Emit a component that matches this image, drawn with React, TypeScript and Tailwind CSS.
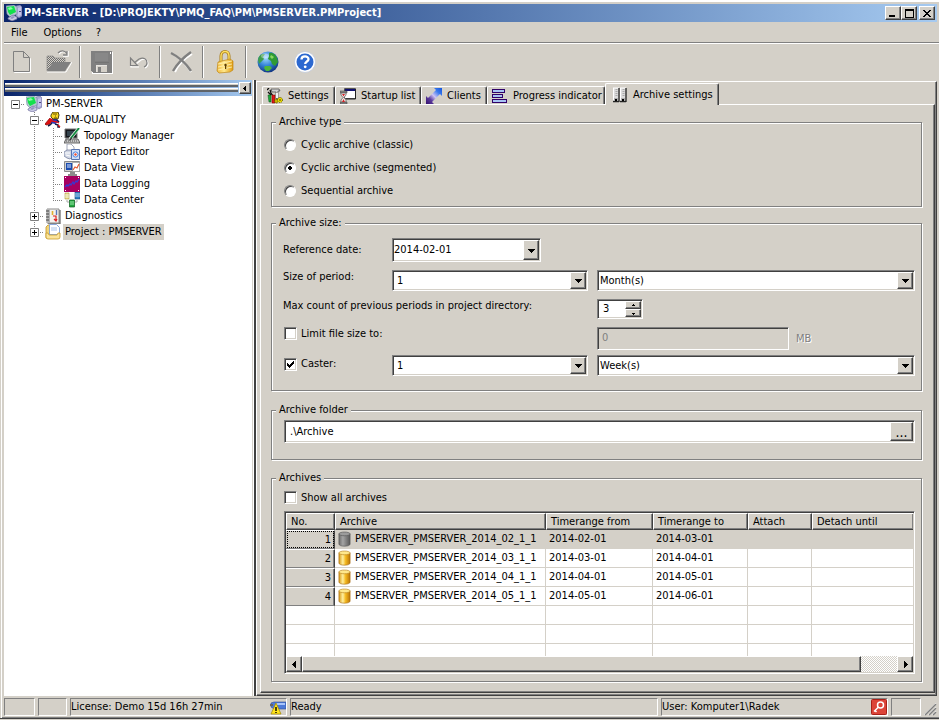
import React, { useState } from 'react';

const RAISED =
  'border border-t-white border-l-white border-r-[#404040] border-b-[#404040] bg-[#d4d0c8] shadow-[inset_-1px_-1px_#808080]';
const SUNKEN =
  'border border-t-[#808080] border-l-[#808080] border-r-white border-b-white p-px shadow-[inset_1px_1px_#404040,inset_-1px_-1px_#d4d0c8]';

interface IconProps {
  children: React.ReactNode;
  size?: number;
}

const Icon: React.FC<IconProps> = ({ children, size = 16 }) => (
  <svg width={size} height={size} viewBox={`0 0 ${size} ${size}`} className="shrink-0" aria-hidden="true">
    {children}
  </svg>
);

const Arrow: React.FC<{ dir: 'down' | 'up' | 'left' | 'right'; small?: boolean }> = ({ dir, small }) => {
  const paths = {
    down: 'M0 2h7v1h-1v1h-1v1h-1v1h-1v-1h-1v-1h-1v-1h-1z',
    up: 'M3 2h1v1h1v1h-3v-1h1z',
    left: 'M5 0v7h-1v-1h-1v-1h-1v-1h-1v-1h1v-1h1v-1h1v-1z',
    right: 'M2 0v7h1v-1h1v-1h1v-1h1v-1h-1v-1h-1v-1h-1v-1z',
  };
  return (
    <svg width="7" height="7" viewBox="0 0 7 7" shapeRendering="crispEdges" className="shrink-0" aria-hidden="true">
      <path d={small && dir === 'down' ? 'M2 3h3v1h-1v1h-1v-1h-1z' : paths[dir]} />
    </svg>
  );
};

/* ---------- icons ---------- */

const ServerIcon = () => (
  <Icon>
    <path d="M10 1l4-1 2 2v9l-3 2-3-2z" fill="#a9a9d6" stroke="#6d6d9c" strokeWidth=".6" />
    <path d="M12 3l3-1v8l-3 1z" fill="#c4c4ea" />
    <path d="M13 6h2v1h-2z" fill="#4c4c80" />
    <path d="M0 1l8-1 3 2v7l-7 3-3-3z" fill="#b5c9cf" stroke="#768aa6" strokeWidth=".6" />
    <path d="M1 2l7-1 2 6-6 3-2-3z" fill="#12e04c" />
    <path d="M2 3l3-1 2 2-4 1z" fill="#8affa4" />
    <path d="M2 13l5-3 4 2v2l-5 2-4-2z" fill="#c9c9e4" stroke="#6d6d9c" strokeWidth=".7" />
    <path d="M4 13l3-2 2 1-3 2z" fill="#9292c0" />
  </Icon>
);

const HeroIcon = () => (
  <Icon>
    <path d="M5 6l5 2-3 3-2 1-4 1-1-1z" fill="#e01010" />
    <path d="M5 6L0 12l1 1 4-1" fill="none" stroke="#900808" strokeWidth=".8" />
    <path d="M8 7h4l1 3-3 2-4-1z" fill="#2038c8" />
    <path d="M6 3l2-3h5l1 3-1 4H8L6 5z" fill="#f8d820" stroke="#3c3000" strokeWidth=".9" />
    <path d="M8 2h4M10 4h1M9 6h3" stroke="#504000" strokeWidth=".9" />
    <path d="M7 9l5 1" stroke="#e01010" strokeWidth="1.500" />
    <path d="M12 8l2 2M7 11l-2 2-2 1M10 12l3 1v2h2" stroke="#181840" strokeWidth="1.500" fill="none" />
    <path d="M13 13l2 2M12 10l2 1" stroke="#e01010" strokeWidth="1.300" />
  </Icon>
);

const TopologyIcon = () => (
  <Icon>
    <path d="M1 1h12v9H1z" fill="#16181c" stroke="#777" />
    <path d="M3 3h8v5H3z" fill="#34444e" />
    <path d="M2 11h12l2 4H0z" fill="#c4c4c4" stroke="#444" strokeWidth=".8" />
    <path d="M2 13h11" stroke="#555" strokeDasharray="1 1" />
    <path d="M15 0L6 11" stroke="#e4f4e8" strokeWidth="3.200" />
    <path d="M15 0L7 10" stroke="#12883e" strokeWidth="1.800" />
    <path d="M7 9l-2 4 3-2z" fill="#222" />
  </Icon>
);

const ReportIcon = () => (
  <Icon>
    <path d="M3 0h4l3 3v6H3z" fill="#fff" stroke="#8a92a8" strokeWidth=".8" />
    <path d="M0 8l3-2h5v7l-2 2-3-1-3-2z" fill="#d0d6e4" stroke="#7680a0" strokeWidth=".8" />
    <path d="M1 9h5M2 11l4 1" stroke="#fff" />
    <path d="M7.500 5.500h8v10h-8z" fill="#cfe0fa" stroke="#5874b0" />
    <circle cx="11.500" cy="10.500" r="2.600" fill="#fff" stroke="#4a80e0" />
    <circle cx="11.500" cy="10.500" r="1.200" fill="#e64b32" />
  </Icon>
);

const DataViewIcon = () => (
  <Icon>
    <path d="M.5 1.500h15v10H.5z" fill="#d0d0d0" stroke="#8a8a8a" />
    <path d="M2 3h7v7H2z" fill="#1c4cae" />
    <path d="M3 5h4M3 7h4" stroke="#dce8ff" />
    <path d="M8.500 2.500h7v9h-7z" fill="#fff" stroke="#999" strokeWidth=".7" />
    <path d="M9 10l2-3 2 1 2-4" stroke="#e65a32" strokeWidth="1.200" fill="none" />
    <path d="M6 12h5v2h2v2H4v-2h2z" fill="#8c8c8c" />
  </Icon>
);

const DataLoggingIcon = () => (
  <Icon>
    <path d="M0 0h16v16H0z" fill="#a80060" />
    <path d="M1 11l2-2 1 1 2-2 1 1 2-3 1 2 2-3 1 1 2-3" stroke="#3838d0" strokeWidth="1.300" fill="none" />
    <path d="M1 1h1v1H1zM14 1h1v1h-1zM1 14h1v1H1zM14 14h1v1h-1z" fill="#fff" />
  </Icon>
);

const DataCenterIcon = () => (
  <Icon>
    <path d="M1 1h4v6H1z" fill="#f0e088" stroke="#a89848" strokeWidth=".6" />
    <path d="M11 0h5v7h-5z" fill="#2f7fc4" stroke="#174a7c" strokeWidth=".6" />
    <path d="M1 3h4M1 5h4M11 2h5M11 4h5" stroke="#e8f2ff" strokeWidth=".7" />
    <path d="M3 8v2h2M13 8v2h-2" stroke="#aaa" fill="none" />
    <path d="M5.500 8h5v7h-5z" fill="#22a83f" stroke="#0c5c1c" strokeWidth=".7" />
    <path d="M6 10h4M6 12h4" stroke="#bff5c8" strokeWidth=".8" />
  </Icon>
);

const DiagnosticsIcon = () => (
  <Icon>
    <path d="M2 1h12v14H2z" fill="#f4f2ee" stroke="#8a8a8a" />
    <path d="M2 1h3v14H2z" fill="#b4b4b4" />
    <path d="M1 3h3M1 6h3M1 9h3M1 12h3" stroke="#444" />
    <path d="M7.500 3v4" stroke="#e0b030" strokeWidth="1.600" />
    <path d="M11.500 2v5" stroke="#5a78b8" strokeWidth="1.400" />
    <path d="M8 8h3v5M9 11l2 2 1-2" stroke="#dc2020" strokeWidth="1.200" fill="none" />
    <path d="M15 2v14H3" stroke="#444" fill="none" />
  </Icon>
);

const ProjectIcon = () => (
  <Icon>
    <path d="M1 3l2-2h3l1 2v11H1z" fill="#f2d478" stroke="#c29628" strokeWidth=".8" />
    <path d="M4.500.5h7l3 3v7h-10z" fill="#fff" stroke="#7fa0d8" strokeWidth=".9" />
    <path d="M6 4h6M6 6h6" stroke="#a9c4ec" />
    <path d="M1 9h2l1 2h8l1-2h2v4q0 2-2 2H3q-2 0-2-2z" fill="#fbe49a" stroke="#c99c2c" strokeWidth=".8" />
  </Icon>
);

const SettingsIcon = () => (
  <Icon>
    <path d="M0 2l2-2M3 2l1 3 2 3 2 5M1 4l3 3" stroke="#111" strokeWidth="1.300" fill="none" />
    <path d="M1 7h3v7H2z" fill="#18a838" stroke="#064c14" strokeWidth=".5" />
    <path d="M5 7h3v8H5z" fill="#e01818" stroke="#700" strokeWidth=".5" />
    <path d="M4 1h8l1 2h-2v8H9V4H5z" fill="#d0d0d0" stroke="#444" strokeWidth=".7" />
    <path d="M9 5h2v5H9z" fill="#f4f4f4" />
    <circle cx="9.500" cy="13" r="2" fill="#c8b400" stroke="#4a4200" strokeDasharray="1 1" />
    <circle cx="13" cy="12" r="2.500" fill="#f0e000" stroke="#4a4200" strokeDasharray="1 1" />
    <circle cx="13" cy="12" r=".8" fill="#302800" />
  </Icon>
);

const StartupIcon = () => (
  <Icon>
    <path d="M4.500.5h11v10h-11z" fill="#fff" stroke="#555" />
    <path d="M5 1h10v2H5z" fill="#101070" />
    <path d="M15.500 1v10H6" fill="none" stroke="#222" />
    <path d="M0 3h7v2H0zM0 14h7v2H0z" fill="#909090" stroke="#333" strokeWidth=".5" />
    <path d="M1 5h5v2L4 9.500 6 12v2H1v-2l2-2.500L1 7z" fill="#f4e8e8" stroke="#555" strokeWidth=".7" />
    <path d="M2 6h3L3.500 8.500zM3.500 11L5 14H2z" fill="#d02828" />
  </Icon>
);

const ClientsIcon = () => (
  <Icon>
    <defs>
      <linearGradient id="clientsArrow" x1="0" y1="1" x2="1" y2="0">
        <stop offset="0" stopColor="#35106e" />
        <stop offset=".28" stopColor="#5a3a9c" />
        <stop offset=".5" stopColor="#cdc4f4" />
        <stop offset=".75" stopColor="#3878ee" />
        <stop offset="1" stopColor="#1455dc" />
      </linearGradient>
    </defs>
    <path d="M16 0H8l2 2-8 8-2-2v8h8l-2-2 8-8 2 2z" fill="url(#clientsArrow)" />
  </Icon>
);

const ProgressIcon = () => (
  <svg width="16" height="16" viewBox="0 0 16 16" shapeRendering="crispEdges" className="shrink-0" aria-hidden="true">
    <path d="M0 1h13v4H0zM0 6h11v4H0zM0 11h15v4H0z" fill="#300068" />
    <path d="M1 2h11v2H1zM1 7h9v2H1zM1 12h13v2H1z" fill="#a8c4f4" />
  </svg>
);

const ArchiveIcon = () => (
  <Icon>
    <path d="M1 1h5v14H1zM8 1h5v14H8z" fill="#dcdcdc" />
    <path d="M0 1h6M.5 1v13M7 1h6M7.500 1v13" stroke="#fff" />
    <path d="M6 1v14M13 1v14M0 14.500h6M7 14.500h6" stroke="#222" strokeWidth="1.300" />
    <path d="M3.500 2v8M10.500 2v8" stroke="#aaa" strokeWidth="2" strokeDasharray="1 1" />
    <path d="M1 11h4v3H1zM8 11h4v3H8z" fill="#b0b0b0" />
    <path d="M2 12h2v2H2zM9 12h2v2H9z" fill="#000" />
  </Icon>
);

const CylinderIcon: React.FC<{ grey?: boolean }> = ({ grey }) => (
  <svg width="13" height="16" viewBox="0 0 14 16" className="shrink-0" aria-hidden="true">
    <defs>
      <linearGradient id="cylGold">
        <stop offset="0" stopColor="#d89a18" />
        <stop offset=".35" stopColor="#fff0a0" />
        <stop offset=".6" stopColor="#f4b820" />
        <stop offset="1" stopColor="#b87408" />
      </linearGradient>
      <linearGradient id="cylGrey">
        <stop offset="0" stopColor="#6c6c6c" />
        <stop offset=".35" stopColor="#a4a4a4" />
        <stop offset="1" stopColor="#585858" />
      </linearGradient>
    </defs>
    <path
      d="M1 2.500v11c0 3 12 3 12 0v-11z"
      fill={grey ? 'url(#cylGrey)' : 'url(#cylGold)'}
      stroke={grey ? '#555' : '#a86c10'}
      strokeWidth=".7"
    />
    <ellipse cx="7" cy="2.500" rx="6" ry="2" fill={grey ? '#9c9c9c' : '#ffe88c'} stroke={grey ? '#555' : '#b88420'} strokeWidth=".7" />
  </svg>
);

/* ---------- title, menu, toolbar ---------- */

const TitleBar = () => (
  <header className="mt-1 mr-0.5 flex h-[18px] items-center bg-linear-to-r from-[#0a246a] to-[#a6caf0] pl-0.5 pr-0.5">
    <ServerIcon />
    <h1 className="ml-0.5 flex-1 truncate text-[11px] font-bold text-white">
      PM-SERVER - [D:\PROJEKTY\PMQ_FAQ\PM\PMSERVER.PMProject]
    </h1>
    <div className="flex">
      <button aria-label="Minimize" className={`flex h-3.5 w-4 items-center justify-center ${RAISED}`}>
        <svg width="8" height="8" viewBox="0 0 8 8" shapeRendering="crispEdges">
          <path d="M0 6h6v2H0z" />
        </svg>
      </button>
      <button aria-label="Maximize" className={`mr-0.5 flex h-3.5 w-4 items-center justify-center ${RAISED}`}>
        <svg width="9" height="9" viewBox="0 0 9 9" shapeRendering="crispEdges">
          <path d="M0 0h9v9H0zM1 2v6h7V2z" fillRule="evenodd" />
        </svg>
      </button>
      <button aria-label="Close" className={`flex h-3.5 w-4 items-center justify-center ${RAISED}`}>
        <svg width="8" height="7" viewBox="0 0 8 7" shapeRendering="crispEdges">
          <path d="M0 0h2v1h1v1h2V1h1V0h2v1H7v1H6v1H5v1h1v1h1v1h1v1H6V6H5V5H3v1H2v1H0V6h1V5h1V4h1V3H2V2H1V1H0z" />
        </svg>
      </button>
    </div>
  </header>
);

const MenuBar = () => (
  <nav className="flex h-[22px] items-center border-b border-white pl-1 shadow-[inset_0_-1px_#808080]">
    <button className="px-[3px]">File</button>
    <button className="ml-2.5 px-[3px]">Options</button>
    <button className="ml-2 px-[3px]">?</button>
  </nav>
);

const ToolButton: React.FC<{ label: string; children: React.ReactNode }> = ({ label, children }) => (
  <button aria-label={label} className="flex h-9 w-[37px] items-center justify-center">
    {children}
  </button>
);

const ToolSeparator = () => <span className="mx-0.5 h-8 w-0.5 border-l border-[#808080] border-r border-r-white" />;

const Toolbar = () => (
  <div role="toolbar" className="-ml-px flex h-9 items-center">
    <ToolButton label="New">
      <svg width="20" height="24" viewBox="0 0 20 24">
        <path d="M2.500 2.500h10l6 6v14h-16z" fill="none" stroke="#fff" />
        <path d="M1.500 1.500h10l6 6v14h-16zM11.500 1.500v6h6" fill="#d4d0c8" stroke="#808080" />
      </svg>
    </ToolButton>
    <ToolButton label="Open">
      <svg width="26" height="24" viewBox="0 0 26 24">
        <defs>
          <pattern id="dither" width="2" height="2" patternUnits="userSpaceOnUse">
            <path d="M0 0h1v1H0zM1 1h1v1H1z" fill="#707070" />
          </pattern>
        </defs>
        <path d="M1 22h19l6-10" fill="none" stroke="#fff" />
        <path d="M1 6h6l2 2h10v13H1z" fill="url(#dither)" stroke="#808080" strokeWidth=".6" />
        <path d="M1 21l6-9h18l-6 9z" fill="#808080" />
        <path d="M13 4c3-4 7-3 9 1M22 1v5h-5" fill="none" stroke="#fff" strokeWidth="1.500" />
        <path d="M12 3c3-3 7-3 9 1M21 1v4h-4" fill="none" stroke="#808080" strokeWidth="1.300" />
      </svg>
    </ToolButton>
    <ToolSeparator />
    <ToolButton label="Save">
      <svg width="23" height="24" viewBox="0 0 23 24" shapeRendering="crispEdges">
        <path d="M2 2h21v22H2z" fill="#fff" />
        <path d="M1 1h21v22H3l-2-2z" fill="#808080" />
        <path d="M5 3h13v8H5z" fill="#888" />
        <path d="M5 12h14v1H5z" fill="#747474" />
        <path d="M6 15h11v7H6z" fill="#e6e4e0" />
        <path d="M7 16h10v6H7z" fill="#d4d0c8" />
        <path d="M8 17h3v5H8z" fill="#808080" />
        <path d="M20 2h1v2h-1z" fill="#fff" />
      </svg>
    </ToolButton>
    <ToolButton label="Undo">
      <svg width="22" height="18" viewBox="0 0 22 18" fill="none">
        <path d="M8 11l5-4c4-2 7 0 7 4 0 2-1 3-3 4M3 6v8h8" stroke="#fff" strokeWidth="1.200" />
        <path d="M6 10l5-4c5-2 8 0 8 4 0 2-1 3-3 4" stroke="#808080" strokeWidth="1.200" />
        <path d="M2.500 5v7.500h7z" fill="#d4d0c8" stroke="#808080" strokeWidth="1.200" />
      </svg>
    </ToolButton>
    <ToolSeparator />
    <ToolButton label="Delete">
      <svg width="24" height="22" viewBox="0 0 24 22" fill="none">
        <path d="M3 3c6 4 13 10 18 18M22 3C14 8 8 14 5 21" stroke="#fff" strokeWidth="2" />
        <path d="M1 2c6 3 14 9 20 18M21 1C14 6 7 13 3 20" stroke="#808080" strokeWidth="2.400" />
      </svg>
    </ToolButton>
    <ToolSeparator />
    <ToolButton label="Lock">
      <svg width="18" height="24" viewBox="0 0 18 24">
        <defs>
          <linearGradient id="lockGold">
            <stop offset="0" stopColor="#f0b83c" />
            <stop offset=".45" stopColor="#ffe88c" />
            <stop offset="1" stopColor="#e09a0c" />
          </linearGradient>
        </defs>
        <path d="M5 12V6c0-6 8-6 8 0v6" fill="none" stroke="#a87c18" strokeWidth="3" />
        <path d="M5 12V6c0-6 8-6 8 0v6" fill="none" stroke="#ffe060" strokeWidth="1.400" />
        <path d="M2 12l12-3 3 2v9l-3 2-11 1-2-2z" fill="url(#lockGold)" stroke="#c08818" strokeWidth=".7" />
        <path d="M2 14l14-3M2 17l14-3M2 20l14-3" stroke="#fff4b8" strokeWidth=".8" />
        <circle cx="9.500" cy="15" r="1.200" fill="#5c3c00" />
        <path d="M9 15h1.200v4H9z" fill="#5c3c00" />
      </svg>
    </ToolButton>
    <ToolSeparator />
    <ToolButton label="Web">
      <svg width="22" height="22" viewBox="0 0 22 22">
        <defs>
          <radialGradient id="globe" cx=".4" cy=".3" r=".75">
            <stop offset="0" stopColor="#a4dcff" />
            <stop offset=".5" stopColor="#3484d8" />
            <stop offset="1" stopColor="#0c2c78" />
          </radialGradient>
        </defs>
        <circle cx="11" cy="11" r="10.500" fill="url(#globe)" />
        <path d="M1 9c0-3 2-5 4-6l3 0-2 3 1 2-3 3-2 2z" fill="#3f9e4c" />
        <path d="M12 2c4-1 7 2 8 5l1 4-3 4-3-2-1-3-3-2 1-3z" fill="#2f9a34" />
        <path d="M14 4l3 2-2 2-2-2z" fill="#8cd860" />
        <path d="M8 15l5 0 2 2-3 3-3 0-2-3z" fill="#4cb63c" />
        <ellipse cx="8" cy="5" rx="4" ry="2.500" fill="#fff" opacity=".35" />
      </svg>
    </ToolButton>
    <ToolButton label="Help">
      <svg width="22" height="22" viewBox="0 0 22 22">
        <circle cx="11" cy="11" r="10.500" fill="#fff" stroke="#c0c8d8" strokeWidth=".8" />
        <circle cx="11" cy="11" r="8.500" fill="#2c68d0" />
        <path d="M7.500 8.500c0-4 7-4 7-.3 0 2.300-3.300 2.300-3.300 4.800" fill="none" stroke="#fff" strokeWidth="2.300" />
        <circle cx="11.200" cy="15.800" r="1.400" fill="#fff" />
      </svg>
    </ToolButton>
  </div>
);

/* ---------- tree ---------- */

type Cell = 'plus' | 'minus' | 'minusRoot' | 'line' | 'tee' | 'end' | 'plusEnd' | 'blank';

interface TreeItem {
  label: string;
  icon: React.ReactNode;
  cells: Cell[];
  selected?: boolean;
}

const TREE: TreeItem[] = [
  { label: 'PM-SERVER', icon: <ServerIcon />, cells: ['minusRoot'] },
  { label: 'PM-QUALITY', icon: <HeroIcon />, cells: ['blank', 'minus'] },
  { label: 'Topology Manager', icon: <TopologyIcon />, cells: ['blank', 'line', 'tee'] },
  { label: 'Report Editor', icon: <ReportIcon />, cells: ['blank', 'line', 'tee'] },
  { label: 'Data View', icon: <DataViewIcon />, cells: ['blank', 'line', 'tee'] },
  { label: 'Data Logging', icon: <DataLoggingIcon />, cells: ['blank', 'line', 'tee'] },
  { label: 'Data Center', icon: <DataCenterIcon />, cells: ['blank', 'line', 'end'] },
  { label: 'Diagnostics', icon: <DiagnosticsIcon />, cells: ['blank', 'plus'] },
  { label: 'Project : PMSERVER', icon: <ProjectIcon />, cells: ['blank', 'plusEnd'], selected: true },
];

const TreeCell: React.FC<{ kind: Cell }> = ({ kind }) => {
  const hasBox = kind.startsWith('plus') || kind.startsWith('minus');
  const up = kind !== 'minusRoot' && kind !== 'blank';
  const down = kind === 'plus' || kind === 'minus' || kind === 'line' || kind === 'tee';
  return (
    <svg width="19" height="16" viewBox="0 0 19 16" className="shrink-0" aria-hidden="true">
      <g stroke="#808080" strokeDasharray="1 1" fill="none">
        {up && <path d="M9.500 0v8" />}
        {down && <path d="M9.500 8v8" />}
        {kind !== 'line' && kind !== 'blank' && <path d="M9 8.500h10" />}
      </g>
      {hasBox && (
        <>
          <path d="M5.500 4.500h8v8h-8z" fill="#fff" stroke="#808080" />
          <path d="M7 8.500h5" stroke="#000" />
          {kind.startsWith('plus') && <path d="M9.500 6v5" stroke="#000" />}
        </>
      )}
    </svg>
  );
};

const Sidebar = () => (
  <aside className="flex w-[248px] shrink-0 flex-col bg-white">
    <div className="flex h-4 items-start gap-px bg-linear-to-r from-[#0a246a] to-[#a6caf0] pt-0.5 pr-px pl-px">
      <div className="mt-px flex flex-1 flex-col gap-px">
        <span className="h-1 border-t border-white bg-[#d4d0c8] border-b-2 border-b-[#606468]" />
        <span className="h-1 border-t border-white bg-[#d4d0c8] border-b-2 border-b-[#606468]" />
      </div>
      <button aria-label="Hide panel" className={`flex h-3 w-3 items-center justify-center ${RAISED}`}>
        <svg width="4" height="5" viewBox="0 0 4 5" shapeRendering="crispEdges">
          <path d="M3 0v5H2V4H1V3H0V2h1V1h1V0z" />
        </svg>
      </button>
    </div>
    <ul role="tree" className="flex-1">
      {TREE.map(item => (
        <li key={item.label} role="treeitem" aria-selected={!!item.selected} className="flex h-4 items-center pl-0.5">
          {item.cells.map((kind, i) => (
            <TreeCell key={i} kind={kind} />
          ))}
          <span className="ml-px">{item.icon}</span>
          <span className={`ml-0.5 px-0.5 leading-4 whitespace-nowrap ${item.selected ? 'bg-[#d4d0c8]' : ''}`}>
            {item.label}
          </span>
        </li>
      ))}
    </ul>
  </aside>
);

/* ---------- form controls ---------- */

const Group: React.FC<{ title: string; className: string; children: React.ReactNode }> = ({ title, className, children }) => (
  <fieldset
    className={`min-w-0 border border-[#808080] pr-1.5 pl-3 shadow-[1px_1px_#fff,inset_1px_1px_#fff] ${className}`}
  >
    <legend className="-ml-2 h-3.5 bg-[#d4d0c8] pr-[3px] pl-[3px]">{title}</legend>
    {children}
  </fieldset>
);

interface SelectBoxProps {
  id: string;
  label: string;
  value: string;
  className: string;
}

const SelectBox: React.FC<SelectBoxProps> = ({ id, label, value, className }) => (
  <div className={`relative bg-white ${SUNKEN} ${className}`}>
    <select id={id} aria-label={label} className="block h-full w-full appearance-none bg-transparent outline-none">
      <option>{value}</option>
    </select>
    <span
      className={`pointer-events-none absolute top-px right-px bottom-px flex w-4 items-center justify-center ${RAISED}`}
    >
      <Arrow dir="down" />
    </span>
  </div>
);

const CheckBox: React.FC<{ label: string; defaultChecked?: boolean }> = ({ label, defaultChecked }) => (
  <label className="flex h-[13px] items-center gap-1">
    <span className="relative size-[13px] shrink-0">
      <input
        type="checkbox"
        defaultChecked={defaultChecked}
        className={`peer block size-[13px] appearance-none bg-white ${SUNKEN}`}
      />
      <svg
        width="7"
        height="7"
        viewBox="0 0 7 7"
        shapeRendering="crispEdges"
        className="pointer-events-none absolute top-[3px] left-[3px] hidden peer-checked:block"
      >
        <path d="M0 2h1v1h1v1h1V3h1V2h1V1h1V0h1v3H6v1H5v1H4v1H3v1H2V6H1V5H0z" />
      </svg>
    </span>
    {label}
  </label>
);

const ARCHIVE_TYPES = ['Cyclic archive (classic)', 'Cyclic archive (segmented)', 'Sequential archive'];

const ArchiveType = () => {
  const [type, setType] = useState(ARCHIVE_TYPES[1]);
  return (
    <Group title="Archive type" className="pt-1 pb-1">
      {ARCHIVE_TYPES.map(t => (
        <label key={t} className="flex h-[23px] items-center gap-1">
          <input
            type="radio"
            name="archiveType"
            checked={type === t}
            onChange={() => setType(t)}
            className="mr-px size-3 appearance-none rounded-full border border-t-[#808080] border-r-white border-b-white border-l-[#808080] bg-white shadow-[inset_1px_1px_#404040] checked:bg-[radial-gradient(circle,#000_2px,#fff_2px)]"
          />
          {t}
        </label>
      ))}
    </Group>
  );
};

const ArchiveSize = () => (
  <Group title="Archive size:" className="mt-[9px] pt-2 pb-3.5">
    <div className="-ml-px grid grid-cols-[100px_196px_1fr] grid-rows-[32px_29px_28px_28px_21px] items-start gap-x-[9px]">
      <label htmlFor="refDate" className="flex h-6 items-center">
        Reference date:
      </label>
      <SelectBox id="refDate" label="Reference date" value="2014-02-01" className="col-span-2 h-6 w-[149px]" />

      <label htmlFor="period">Size of period:</label>
      <SelectBox id="period" label="Size of period" value="1" className="h-[21px] pl-1" />
      <SelectBox id="periodUnit" label="Period unit" value="Month(s)" className="h-[21px] pl-0.5" />

      <label htmlFor="maxCount" className="col-span-2">
        Max count of previous periods in project directory:
      </label>
      <div className={`flex h-5 w-[46px] bg-white ${SUNKEN}`}>
        <input id="maxCount" defaultValue="3" className="w-0 flex-1 bg-transparent pl-1 outline-none" />
        <div className="flex w-4 flex-col">
          <button aria-label="Increase" className={`flex h-2 items-center justify-center ${RAISED}`}>
            <Arrow dir="up" small />
          </button>
          <button aria-label="Decrease" className={`flex h-2 items-center justify-center ${RAISED}`}>
            <Arrow dir="down" small />
          </button>
        </div>
      </div>

      <div className="col-span-2 pl-px">
        <CheckBox label="Limit file size to:" />
      </div>
      <div className="flex items-center">
        <input
          aria-label="File size limit"
          disabled
          defaultValue="0"
          className={`h-[23px] w-[192px] pb-1 pl-1 text-[#808080] ${SUNKEN}`}
        />
        <span className="ml-[7px] text-[#808080] [text-shadow:1px_1px_#fff]">MB</span>
      </div>

      <div className="flex h-[18px] items-center pl-px">
        <CheckBox label="Caster:" defaultChecked />
      </div>
      <SelectBox id="caster" label="Caster" value="1" className="h-[21px] pl-1" />
      <SelectBox id="casterUnit" label="Caster unit" value="Week(s)" className="h-[21px] pl-0.5" />
    </div>
  </Group>
);

const ArchiveFolder = () => (
  <Group title="Archive folder" className="mt-3 pt-[3px] pb-4">
    <div className={`flex h-[23px] bg-white ${SUNKEN}`}>
      <input aria-label="Archive folder" defaultValue=".\Archive" className="min-w-0 flex-1 pl-1 outline-none" />
      <button aria-label="Browse" className={`w-[23px] text-sm leading-3 ${RAISED}`}>
        ...
      </button>
    </div>
  </Group>
);

/* ---------- archives table ---------- */

const COLUMNS = ['No.', 'Archive', 'Timerange from', 'Timerange to', 'Attach', 'Detach until'];

const ARCHIVES = [
  { name: 'PMSERVER_PMSERVER_2014_02_1_1', from: '2014-02-01', to: '2014-03-01' },
  { name: 'PMSERVER_PMSERVER_2014_03_1_1', from: '2014-03-01', to: '2014-04-01' },
  { name: 'PMSERVER_PMSERVER_2014_04_1_1', from: '2014-04-01', to: '2014-05-01' },
  { name: 'PMSERVER_PMSERVER_2014_05_1_1', from: '2014-05-01', to: '2014-06-01' },
];

const CELL = 'h-[19px] border-r border-b border-[#d4d0c8] p-0 pl-[3px] whitespace-nowrap last:border-r-0';

const ArchivesTable = () => {
  const [selected, setSelected] = useState(0);
  return (
    <div className={`mt-[7px] bg-white ${SUNKEN}`}>
      <div className="h-[143px] overflow-hidden">
        <table className="w-full table-fixed border-separate border-spacing-0">
          <colgroup>
            <col className="w-[49px]" />
            <col className="w-[211px]" />
            <col className="w-[107px]" />
            <col className="w-[95px]" />
            <col className="w-[64px]" />
            <col />
          </colgroup>
          <thead>
            <tr>
              {COLUMNS.map(c => (
                <th key={c} className={`h-[17px] p-0 pl-1 text-left leading-3.5 font-normal last:border-r-0 ${RAISED}`}>
                  {c}
                </th>
              ))}
            </tr>
          </thead>
          <tbody>
            {ARCHIVES.map((a, i) => (
              <tr key={a.name} onClick={() => setSelected(i)} className={i === selected ? 'bg-[#d4d0c8]' : ''}>
                <th
                  className={`h-[19px] border-t border-r border-b border-t-white border-r-[#404040] border-b-[#808080] bg-[#d4d0c8] p-0 pr-[3px] text-right font-normal shadow-[inset_-1px_0_#808080] ${
                    i === selected ? 'outline outline-dotted -outline-offset-2 outline-black' : ''
                  }`}
                >
                  {i + 1}
                </th>
                <td className={CELL}>
                  <span className="flex items-center gap-1">
                    <CylinderIcon grey={i === 0} />
                    {a.name}
                  </span>
                </td>
                <td className={CELL}>{a.from}</td>
                <td className={CELL}>{a.to}</td>
                <td className={CELL} />
                <td className={CELL} />
              </tr>
            ))}
            {[0, 1, 2].map(i => (
              <tr key={i}>
                {COLUMNS.map(c => (
                  <td key={c} className={CELL} />
                ))}
              </tr>
            ))}
          </tbody>
        </table>
      </div>
      <div className="flex h-4 bg-[repeating-conic-gradient(#fff_0_25%,#d4d0c8_0_50%)] bg-size-[2px_2px]">
        <button aria-label="Scroll left" className={`flex w-4 items-center justify-center ${RAISED}`}>
          <Arrow dir="left" />
        </button>
        <div className="flex-1">
          <div className={`h-4 w-[94%] ${RAISED}`} />
        </div>
        <button aria-label="Scroll right" className={`flex w-4 items-center justify-center ${RAISED}`}>
          <Arrow dir="right" />
        </button>
      </div>
    </div>
  );
};

const Archives = () => (
  <Group title="Archives" className="mt-[11px] flex-1 pt-1.5 pb-1.5">
    <CheckBox label="Show all archives" />
    <ArchivesTable />
  </Group>
);

/* ---------- tabs ---------- */

const TABS = [
  { label: 'Settings', icon: <SettingsIcon />, width: 'w-[73px]' },
  { label: 'Startup list', icon: <StartupIcon />, width: 'w-[86px]' },
  { label: 'Clients', icon: <ClientsIcon />, width: 'w-[66px]' },
  { label: 'Progress indicator', icon: <ProgressIcon />, width: 'w-[118px]' },
];

const TabStrip = () => (
  <div role="tablist" className="flex h-[21px] items-end pl-0.5">
    {TABS.map(tab => (
      <button
        key={tab.label}
        role="tab"
        aria-selected="false"
        className={`flex h-[18px] items-center gap-[5px] rounded-t-xs border-t border-r border-l border-white border-r-[#404040] pl-1 whitespace-nowrap shadow-[inset_-1px_0_#808080] last-of-type:border-r-white ${tab.width}`}
      >
        {tab.icon}
        {tab.label}
      </button>
    ))}
    <button
      role="tab"
      aria-selected="true"
      className="relative -mb-px flex h-[22px] w-[114px] items-center gap-1 rounded-t-xs border-t border-r border-l border-white border-r-[#404040] bg-[#d4d0c8] pl-[7px] whitespace-nowrap shadow-[inset_-1px_0_#808080]"
    >
      <ArchiveIcon />
      Archive settings
    </button>
  </div>
);

/* ---------- status bar ---------- */

const PANE = 'flex items-center border border-t-[#808080] border-r-white border-b-white border-l-[#808080]';

const StatusBar = () => (
  <footer className="mt-0.5 mr-0.5 flex h-[18px] gap-[3px]">
    <div className={`w-[31px] ${PANE}`} />
    <div className={`w-[29px] ${PANE}`} />
    <div className={`w-[217px] justify-between ${PANE}`}>
      License: Demo 15d 16h 27min
      <Icon>
        <path d="M1 4l3-1h12v7H4L1 8z" fill="#4e7ad8" stroke="#2c4a94" strokeWidth=".6" />
        <path d="M6 5h9" stroke="#a8c4fa" strokeWidth="2" />
        <path d="M0 6h3" stroke="#666" strokeWidth="2" />
        <path d="M6 4l5 11H1z" fill="#ffe41c" stroke="#a08400" strokeWidth=".7" />
        <path d="M6 8v4M6 13v1" stroke="#000" strokeWidth="1.400" />
      </Icon>
    </div>
    <div className={`flex-1 ${PANE}`}>Ready</div>
    <div className={`w-[227px] justify-between ${PANE}`}>
      User: Komputer1\Radek
      <Icon>
        <rect width="15" height="15" x=".5" y=".5" rx="1" fill="#dc4438" stroke="#a82018" />
        <circle cx="9.500" cy="6" r="3" fill="none" stroke="#fff" strokeWidth="1.500" />
        <path d="M7.500 8L3 12.500M4 11.500l1.500 1.500" stroke="#fff" strokeWidth="1.500" />
      </Icon>
    </div>
    <div className={`w-[30px] ${PANE}`} />
    <svg width="13" height="18" viewBox="0 0 13 18" aria-hidden="true">
      <path d="M0 17L12 5M4 17l8-8M8 17l4-4" stroke="#fff" />
      <path d="M1 17L12 6M5 17l7-7M9 17l3-3" stroke="#808080" strokeWidth="1.500" />
    </svg>
  </footer>
);

const App = () => (
  <div className="flex min-h-screen flex-col bg-[#d4d0c8] pb-px font-['DejaVu_Sans_Condensed',Tahoma,sans-serif] text-[11px] leading-3.5 text-black">
    <div className="flex flex-1 flex-col border-b border-[#404040] pl-1 shadow-[inset_1px_0_#d4d0c8,inset_2px_2px_#fff,inset_0_-1px_#808080]">
      <TitleBar />
      <MenuBar />
      <Toolbar />
      <div className="flex flex-1">
        <Sidebar />
        <div className="w-1 border-r-2 border-l border-[#404040] border-l-[#d4d0c8] bg-white" />
        <main className="mt-px mr-0.5 flex min-w-0 flex-1 flex-col border border-white border-r-[#404040] border-b-[#404040] pt-px pr-px pb-0.5 pl-[3px] shadow-[inset_-1px_-1px_#808080]">
          <TabStrip />
          <section
            role="tabpanel"
            className="flex flex-1 flex-col border border-white border-r-[#404040] border-b-[#404040] pt-2.5 pr-3 pb-2.5 pl-2.5 shadow-[inset_-1px_-1px_#808080]"
          >
            <ArchiveType />
            <ArchiveSize />
            <ArchiveFolder />
            <Archives />
          </section>
        </main>
      </div>
      <div className="pb-0.5">
        <StatusBar />
      </div>
    </div>
  </div>
);

export default App;
